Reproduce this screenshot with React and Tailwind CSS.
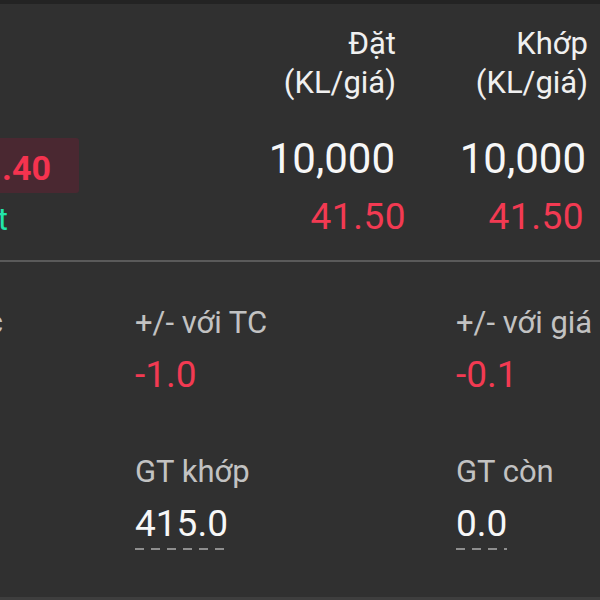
import React from "react";

const red = "text-[#f23a52]";

const OrderCol = ({ title, qty, price, titlePad, qtyPad, pricePad }) => (
  <div className="flex flex-col items-end">
    <div className={`text-[31px] leading-[39px] text-[#f0f0f0] text-right ${titlePad}`}>
      <div>{title}</div>
      <div>(KL/giá)</div>
    </div>
    <div className={`mt-[33px] text-[42px] leading-[48px] text-[#f7f7f7] ${qtyPad}`}>{qty}</div>
    <div className={`mt-[12px] text-[37px] leading-[44px] tracking-[0.5px] ${red} ${pricePad}`}>{price}</div>
  </div>
);

const Stat = ({ label, value, valueClass, dashed }) => (
  <div className="flex flex-col items-start whitespace-nowrap">
    <div className="text-[31px] leading-[34px] text-[#c2c2c2]">{label}</div>
    <div className="mt-[14px] inline-flex flex-col">
      <div className={`text-[37px] leading-[42px] ${valueClass}`}>{value}</div>
      {dashed && (
        <div className="mt-[3px] h-[2px] w-full bg-[linear-gradient(to_right,#8e8e8e_58%,transparent_0)] bg-[length:16px_2px] bg-repeat-x" />
      )}
    </div>
  </div>
);

export default function App() {
  return (
    <div className="w-[600px] h-[600px] overflow-hidden flex flex-col bg-[#303030] font-['Roboto','Noto_Sans',sans-serif]">
      <div className="h-[4px] bg-[#232323]" />

      {/* order summary */}
      <div className="grid grid-cols-[212px_194px_194px] items-start pt-[20px] pb-[21px]">
        <div className="flex flex-col">
          <div className="mt-[114px] w-[79px] h-[55px] flex justify-end overflow-hidden rounded-r-[3px] bg-[#4a2831]">
            <span className="pt-[3px] pr-[28px] text-[34px] leading-[55px] font-bold text-[#f5334f] whitespace-nowrap">41.40</span>
          </div>
          <div className="mt-[9px] w-[8px] flex justify-end overflow-hidden">
            <span className="text-[31px] leading-[36px] text-[#22e5aa] whitespace-nowrap">Khớp hết</span>
          </div>
        </div>
        <OrderCol title="Đặt" qty="10,000" price="41.50" titlePad="pr-[10px]" qtyPad="pr-[11px]" pricePad="pr-0" />
        <OrderCol title="Khớp" qty="10,000" price="41.50" titlePad="pr-[12px]" qtyPad="pr-[14px]" pricePad="pr-[16px]" />
      </div>

      <div className="h-[2px] bg-[#5a5a5a]" />

      {/* details */}
      <div className="flex-1 grid grid-cols-[135px_321px_1fr] content-start pt-[44px]">
        <div className="flex justify-end overflow-hidden w-[3px]">
          <span className="text-[31px] leading-[34px] text-[#c2c2c2] whitespace-nowrap">Số hiệu lệnh gốc</span>
        </div>
        <div className="flex flex-col gap-[59px]">
          <Stat label="+/- với TC" value="-1.0" valueClass={red} />
          <Stat label="GT khớp" value="415.0" valueClass="text-[#f7f7f7]" dashed />
        </div>
        <div className="flex flex-col gap-[59px]">
          <Stat label="+/- với giá" value="-0.1" valueClass={red} />
          <Stat label="GT còn" value="0.0" valueClass="text-[#f7f7f7]" dashed />
        </div>
      </div>

      <div className="h-[3px] bg-[#3e3e3e]" />
    </div>
  );
}
